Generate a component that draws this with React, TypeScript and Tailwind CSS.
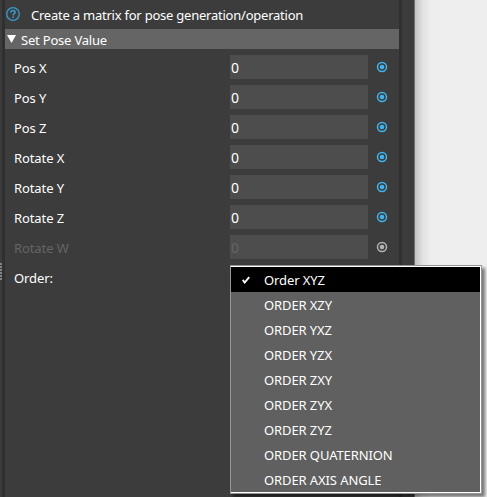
type RowProps = { label: string; disabled?: boolean };

const rows: RowProps[] = [
  { label: 'Pos X' },
  { label: 'Pos Y' },
  { label: 'Pos Z' },
  { label: 'Rotate X' },
  { label: 'Rotate Y' },
  { label: 'Rotate Z' },
  { label: 'Rotate W', disabled: true },
];

const orders = [
  'Order XYZ',
  'ORDER XZY',
  'ORDER YXZ',
  'ORDER YZX',
  'ORDER ZXY',
  'ORDER ZYX',
  'ORDER ZYZ',
  'ORDER QUATERNION',
  'ORDER AXIS ANGLE',
];

function HelpIcon() {
  return (
    <svg width="14" height="14" viewBox="0 0 14 14" fill="none" stroke="#3a9bcd">
      <circle cx="7" cy="7" r="6.3" strokeWidth="1.3" />
      <path d="M4.9 5.4C4.9 4.1 5.8 3.5 7 3.5s2.1.7 2.1 1.8C9.1 6.7 7.1 6.8 7.1 8.5" strokeWidth="1.6" />
      <path d="M7.1 9.5v1.6" strokeWidth="1.6" />
    </svg>
  );
}

function Port({ disabled }: { disabled?: boolean }) {
  const color = disabled ? '#b4b4b4' : '#3fb4ee';
  return (
    <svg width="12" height="12" viewBox="0 0 12 12">
      <circle cx="6" cy="6" r="4.5" fill="none" stroke={color} strokeWidth="1.5" />
      <circle cx="6" cy="6" r="2.3" fill={color} />
    </svg>
  );
}

function Row({ label, disabled }: RowProps) {
  const tone = disabled ? 'text-[#646464]' : 'text-white';
  return (
    <div className={`flex h-6 items-center ${tone}`}>
      <span className="w-[216px] pt-px tracking-[-0.1px]">{label}</span>
      <div className="flex h-6 w-[138px] items-center bg-[#4d4d4d] pl-[1px] pt-[2px] text-sm">0</div>
      <div className="ml-2">
        <Port disabled={disabled} />
      </div>
    </div>
  );
}

function OrderMenu() {
  return (
    <div className="absolute left-[230px] top-[265px] h-[229px] w-[252px] border border-[#969696] shadow-[3px_3px_3px_rgba(0,0,0,0.5)]">
      <div className="h-full border-y border-r border-white bg-[#606060]">
        {orders.map((name, i) => (
          <div
            key={name}
            className={`flex h-[25px] items-center text-white ${i === 0 ? 'bg-black' : ''}`}
          >
            <span className="flex w-[33px] pl-[11px]">
              {i === 0 && (
                <svg width="8" height="8" viewBox="0 0 8 8" fill="none" stroke="white">
                  <path d="M.7 3.9 2.7 6.5 7.2 1.2" strokeWidth="1.9" />
                </svg>
              )}
            </span>
            <span className="tracking-[-0.1px]">{name}</span>
          </div>
        ))}
      </div>
    </div>
  );
}

export default function App() {
  return (
    <div className="relative flex h-[497px] w-[487px] overflow-hidden bg-[#eeeeee] font-['Noto_Sans',sans-serif] text-[13px] leading-[18px] whitespace-nowrap text-white">
      <div className="flex w-[2px] shrink-0 flex-col gap-px bg-[#3c3c3c] pt-[263px]">
        {[0, 1, 2, 3, 4, 5].map((n) => (
          <div key={n} className="h-[2px] bg-[#858585]" />
        ))}
      </div>
      <div className="w-[3px] shrink-0 bg-[#303030]" />
      <div className="w-[394px] shrink-0 bg-[#3c3c3c]">
        <div className="flex h-[29px] items-center pl-[1px]">
          <div className="pb-px">
            <HelpIcon />
          </div>
          <span className="ml-[11px] pt-px tracking-[-0.23px]">Create a matrix for pose generation/operation</span>
        </div>
        <div className="flex h-5 items-center bg-[#656565] pl-[2px]">
          <svg width="9" height="8" viewBox="0 0 9 8" fill="white">
            <path d="M0 0h9L4.5 8z" />
          </svg>
          <span className="ml-[5px] pt-[2px] tracking-[-0.2px]">Set Pose Value</span>
        </div>
        <div className="flex flex-col gap-1.5 pt-1.5 pl-[9px]">
          {rows.map((row) => (
            <Row key={row.label} {...row} />
          ))}
          <div className="flex h-6 items-center pt-px tracking-[-0.1px]">Order:</div>
        </div>
      </div>
      <div className="w-[3px] shrink-0 bg-[#303030]" />
      <div className="w-3 shrink-0 bg-[#3c3c3c]" />
      <div className="w-px shrink-0 bg-[#6e6e6e]" />
      <div className="w-4 shrink-0 bg-linear-to-r from-[#c3c3c3] via-[#e2e2e2] to-[#eeeeee]" />
      <OrderMenu />
    </div>
  );
}
